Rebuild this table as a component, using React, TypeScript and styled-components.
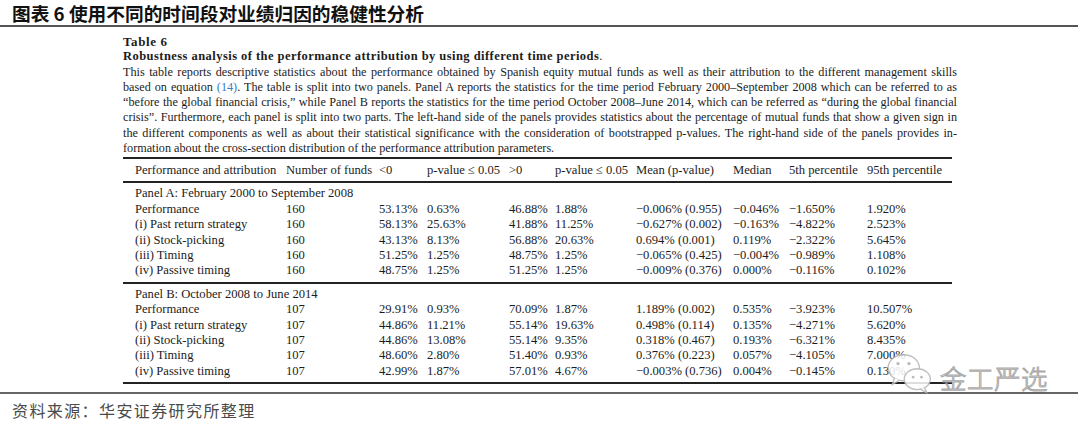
import React from "react";
import styled, { createGlobalStyle } from "styled-components";

const Global = createGlobalStyle`
  html, body { margin: 0; padding: 0; background: #fff; }
  body { width: 1080px; height: 422px; overflow: hidden; }
`;

const Page = styled.div`
  position: relative;
  width: 1080px;
  height: 422px;
  background: #fff;
  display: flex;
  flex-direction: column;
`;

const TitleBar = styled.div`
  height: 27px;
  border-bottom: 2px solid #555;
  width: 1078px;
  box-sizing: border-box;
  padding-left: 12px;
  display: flex;
  align-items: center;
  font-family: "Noto Sans CJK SC", sans-serif;
  font-weight: 700;
  font-size: 18.7px;
  color: #111;
`;

const Body = styled.div`
  margin-left: 123px;
  width: 834px;
  padding-top: 7px;
  font-family: "Liberation Serif", serif;
  color: #1c1c1c;
  font-size: 12.2px;
  line-height: 15.3px;
`;

const Caption = styled.div<{ $title?: boolean }>`
  font-size: ${(p) => (p.$title ? "13px" : "12.5px")};
  letter-spacing: ${(p) => (p.$title ? "0.6px" : "0.45px")};
  & b { font-weight: 700; }
`;

const Line = styled.div<{ $last?: boolean }>`
  text-align: justify;
  text-align-last: ${(p) => (p.$last ? "left" : "justify")};
  white-space: nowrap;
`;

const Ref = styled.span`
  color: #3a7cc0;
`;

const Table = styled.div`
  margin-top: 1px;
  width: 829px;
  border-top: 2px solid #222;
  font-size: 12.6px;
`;

const cols = "163px 93px 48px 82px 46px 81px 97px 56px 78px 85px";

const Row = styled.div<{ $head?: boolean }>`
  display: grid;
  grid-template-columns: ${cols};
  height: ${(p) => (p.$head ? "22px" : "15.4px")};
  align-items: center;
  white-space: nowrap;
  & > span:first-child { padding-left: 12px; }
`;

const Section = styled.div`
  border-top: 2px solid #222;
  padding: 3px 0 3px;
`;

const PanelLabel = styled.div`
  height: 15.4px;
  line-height: 15.4px;
  padding-left: 12px;
`;

const EndLine = styled.div`
  border-top: 2px solid #222;
`;

const FooterLine = styled.div`
  margin-top: 8px;
  width: 1078px;
  border-top: 2px solid #666;
`;

const Footer = styled.div`
  padding-left: 12px;
  margin-top: 6px;
  font-family: "Noto Sans CJK SC", sans-serif;
  font-size: 16px;
  letter-spacing: 1.4px;
  color: #4a4a4a;
  line-height: 20px;
`;

const Watermark = styled.div`
  position: absolute;
  left: 885px;
  top: 350px;
  display: flex;
  align-items: center;
  gap: 5px;
  opacity: 0.85;
`;

const WmText = styled.span`
  font-family: "Noto Sans CJK SC", sans-serif;
  font-size: 26.5px;
  font-weight: 300;
  color: #fff;
  -webkit-text-stroke: 1px #9a9a9a;
  letter-spacing: 0.5px;
  margin-top: 8px;
`;

const header = [
  "Performance and attribution",
  "Number of funds",
  "<0",
  "p-value \u2264 0.05",
  ">0",
  "p-value \u2264 0.05",
  "Mean (p-value)",
  "Median",
  "5th percentile",
  "95th percentile",
];

const M = "\u2212";

const panelA = [
  ["Performance", "160", "53.13%", "0.63%", "46.88%", "1.88%", `${M}0.006% (0.955)`, `${M}0.046%`, `${M}1.650%`, "1.920%"],
  ["(i) Past return strategy", "160", "58.13%", "25.63%", "41.88%", "11.25%", `${M}0.627% (0.002)`, `${M}0.163%`, `${M}4.822%`, "2.523%"],
  ["(ii) Stock-picking", "160", "43.13%", "8.13%", "56.88%", "20.63%", "0.694% (0.001)", "0.119%", `${M}2.322%`, "5.645%"],
  ["(iii) Timing", "160", "51.25%", "1.25%", "48.75%", "1.25%", `${M}0.065% (0.425)`, `${M}0.004%`, `${M}0.989%`, "1.108%"],
  ["(iv) Passive timing", "160", "48.75%", "1.25%", "51.25%", "1.25%", `${M}0.009% (0.376)`, "0.000%", `${M}0.116%`, "0.102%"],
];

const panelB = [
  ["Performance", "107", "29.91%", "0.93%", "70.09%", "1.87%", "1.189% (0.002)", "0.535%", `${M}3.923%`, "10.507%"],
  ["(i) Past return strategy", "107", "44.86%", "11.21%", "55.14%", "19.63%", "0.498% (0.114)", "0.135%", `${M}4.271%`, "5.620%"],
  ["(ii) Stock-picking", "107", "44.86%", "13.08%", "55.14%", "9.35%", "0.318% (0.467)", "0.193%", `${M}6.321%`, "8.435%"],
  ["(iii) Timing", "107", "48.60%", "2.80%", "51.40%", "0.93%", "0.376% (0.223)", "0.057%", `${M}4.105%`, "7.000%"],
  ["(iv) Passive timing", "107", "42.99%", "1.87%", "57.01%", "4.67%", `${M}0.003% (0.736)`, "0.004%", `${M}0.145%`, "0.130%"],
];

function WeChatIcon() {
  return (
    <svg width="50" height="46" viewBox="0 0 48 44">
      <ellipse cx="18" cy="16" rx="15" ry="12.5" fill="#fff" stroke="#b5b5b5" strokeWidth="1.3" />
      <path d="M9 26 L7 32 L14 28" fill="#fff" stroke="#b5b5b5" strokeWidth="1.3" />
      <circle cx="12.5" cy="12" r="1.6" fill="#b0b0b0" />
      <circle cx="23" cy="12" r="1.6" fill="#b0b0b0" />
      <ellipse cx="31" cy="27" rx="12.5" ry="10" fill="#fff" stroke="#b5b5b5" strokeWidth="1.3" />
      <path d="M38 35 L40 40 L34 36.5" fill="#fff" stroke="#b5b5b5" strokeWidth="1.3" />
      <circle cx="27" cy="25" r="1.3" fill="#b0b0b0" />
      <circle cx="35" cy="25" r="1.3" fill="#b0b0b0" />
    </svg>
  );
}

function DataRows({ rows }: { rows: string[][] }) {
  return (
    <>
      {rows.map((r, i) => (
        <Row key={i}>
          {r.map((c, j) => (
            <span key={j}>{c}</span>
          ))}
        </Row>
      ))}
    </>
  );
}

export default function App() {
  return (
    <Page>
      <Global />
      <TitleBar>图表 6 使用不同的时间段对业绩归因的稳健性分析</TitleBar>
      <Body>
        <Caption $title>
          <b>Table 6</b>
        </Caption>
        <Caption>
          <b>Robustness analysis of the performance attribution by using different time periods</b>.
        </Caption>
        <Line>
          This table reports descriptive statistics about the performance obtained by Spanish equity mutual funds as well
          as their attribution to the different management skills
        </Line>
        <Line>
          based on equation <Ref>(14)</Ref>. The table is split into two panels. Panel A reports the statistics for the
          time period February 2000–September 2008 which can be referred to as
        </Line>
        <Line>
          “before the global financial crisis,” while Panel B reports the statistics for the time period October
          2008–June 2014, which can be referred as “during the global financial
        </Line>
        <Line>
          crisis”. Furthermore, each panel is split into two parts. The left-hand side of the panels provides statistics
          about the percentage of mutual funds that show a given sign in
        </Line>
        <Line>
          the different components as well as about their statistical significance with the consideration of
          bootstrapped p-values. The right-hand side of the panels provides in-
        </Line>
        <Line $last>
          formation about the cross-section distribution of the performance attribution parameters.
        </Line>
        <Table>
          <Row $head>
            {header.map((h, i) => (
              <span key={i}>{h}</span>
            ))}
          </Row>
          <Section>
            <PanelLabel>Panel A: February 2000 to September 2008</PanelLabel>
            <DataRows rows={panelA} />
          </Section>
          <Section>
            <PanelLabel>Panel B: October 2008 to June 2014</PanelLabel>
            <DataRows rows={panelB} />
          </Section>
          <EndLine />
        </Table>
      </Body>
      <FooterLine />
      <Footer>资料来源：华安证券研究所整理</Footer>
      <Watermark>
        <WeChatIcon />
        <WmText>金工严选</WmText>
      </Watermark>
    </Page>
  );
}
